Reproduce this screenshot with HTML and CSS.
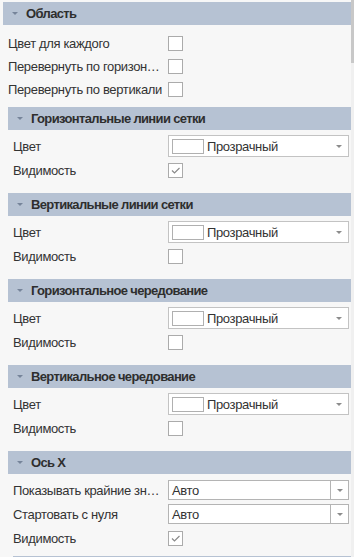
FILE: index.html
```html
<!DOCTYPE html>
<html lang="ru">
<head>
    <meta charset="UTF-8">
    <meta name="viewport" content="width=device-width, initial-scale=1.0">
    <title>Свойства</title>
    <link rel="stylesheet" href="styles.css">
</head>
<body>
    <div class="page">
        <div class="panel">
            <!-- Область -->
            <section class="group top">
                <div class="group-head"><span class="caret"></span>Область</div>
                <div class="group-body">
                    <div class="row">
                        <span class="label">Цвет для каждого</span>
                        <span class="check"></span>
                    </div>
                    <div class="row">
                        <span class="label">Перевернуть по горизонтали</span>
                        <span class="check"></span>
                    </div>
                    <div class="row">
                        <span class="label">Перевернуть по вертикали</span>
                        <span class="check"></span>
                    </div>

                    <section class="group">
                        <div class="group-head"><span class="caret"></span>Горизонтальные линии сетки</div>
                        <div class="group-body">
                            <div class="row">
                                <span class="label">Цвет</span>
                                <div class="color-pick"><span class="swatch"></span><span class="value">Прозрачный</span><span class="arrow"></span></div>
                            </div>
                            <div class="row">
                                <span class="label">Видимость</span>
                                <span class="check on"><svg width="13" height="13" viewBox="0 0 13 13"><polyline points="3,6.5 5.5,9 10.5,4" fill="none" stroke="#8a8a8a" stroke-width="1.2"/></svg></span>
                            </div>
                        </div>
                    </section>

                    <section class="group">
                        <div class="group-head"><span class="caret"></span>Вертикальные линии сетки</div>
                        <div class="group-body">
                            <div class="row">
                                <span class="label">Цвет</span>
                                <div class="color-pick"><span class="swatch"></span><span class="value">Прозрачный</span><span class="arrow"></span></div>
                            </div>
                            <div class="row">
                                <span class="label">Видимость</span>
                                <span class="check"></span>
                            </div>
                        </div>
                    </section>

                    <section class="group">
                        <div class="group-head"><span class="caret"></span>Горизонтальное чередование</div>
                        <div class="group-body">
                            <div class="row">
                                <span class="label">Цвет</span>
                                <div class="color-pick"><span class="swatch"></span><span class="value">Прозрачный</span><span class="arrow"></span></div>
                            </div>
                            <div class="row">
                                <span class="label">Видимость</span>
                                <span class="check"></span>
                            </div>
                        </div>
                    </section>

                    <section class="group">
                        <div class="group-head"><span class="caret"></span>Вертикальное чередование</div>
                        <div class="group-body">
                            <div class="row">
                                <span class="label">Цвет</span>
                                <div class="color-pick"><span class="swatch"></span><span class="value">Прозрачный</span><span class="arrow"></span></div>
                            </div>
                            <div class="row">
                                <span class="label">Видимость</span>
                                <span class="check"></span>
                            </div>
                        </div>
                    </section>

                    <section class="group">
                        <div class="group-head"><span class="caret"></span>Ось X</div>
                        <div class="group-body">
                            <div class="row">
                                <span class="label">Показывать крайние значения</span>
                                <div class="select"><span class="value">Авто</span><span class="select-btn"><span class="arrow"></span></span></div>
                            </div>
                            <div class="row">
                                <span class="label">Стартовать с нуля</span>
                                <div class="select"><span class="value">Авто</span><span class="select-btn"><span class="arrow"></span></span></div>
                            </div>
                            <div class="row">
                                <span class="label">Видимость</span>
                                <span class="check on"><svg width="13" height="13" viewBox="0 0 13 13"><polyline points="3,6.5 5.5,9 10.5,4" fill="none" stroke="#8a8a8a" stroke-width="1.2"/></svg></span>
                            </div>
                            <div class="next-head"></div>
                        </div>
                    </section>
                </div>
            </section>
        </div>
        <div class="scrollbar"><div class="thumb"></div></div>
    </div>
</body>
</html>
```

FILE: styles.css
```css
body {
    margin: 0;
    padding: 0;
    background-color: #f7f7f7;
    font-family: 'Liberation Sans', Arial, sans-serif;
    font-size: 13px;
    letter-spacing: -0.35px;
    color: #333;
}

.page {
    display: flex;
    width: 354px;
    height: 557px;
    overflow: hidden;
}

.panel {
    flex: 1;
    padding: 2px 0 0 3px;
}

/* Скролл */
.scrollbar {
    width: 3px;
    background-color: #f0f0f0;
}

.scrollbar .thumb {
    height: 63px;
    background-color: #c8c8c8;
}

/* Группы */
.group-head {
    display: flex;
    align-items: center;
    height: 23px;
    padding-left: 9px;
    background-color: #b6c2d3;
    font-weight: bold;
    letter-spacing: -0.65px;
    color: #2e2e2e;
}

.caret {
    width: 0;
    height: 0;
    margin-right: 8px;
    border-left: 3px solid transparent;
    border-right: 3px solid transparent;
    border-top: 3px solid #76849a;
}

.top > .group-body {
    padding: 7px 0 0 5px;
}

.top > .group-body > .row {
    height: 23px;
}

.top .group {
    margin-top: 6px;
}

.top .group + .group {
    margin-top: 0;
}

.group .group .group-head {
    padding-left: 9px;
}

.group .group .group-body {
    padding: 4px 0 11px 5px;
}

.row {
    display: flex;
    align-items: center;
    height: 24px;
}

.label {
    flex: 0 0 auto;
    width: 148px;
    margin-right: 7px;
    white-space: nowrap;
    overflow: hidden;
    text-overflow: ellipsis;
}

.top > .group-body > .row .label {
    width: 155px;
    margin-right: 5px;
}

/* Контролы */
.check {
    display: flex;
    align-items: center;
    justify-content: center;
    width: 13px;
    height: 13px;
    border: 1px solid #ababab;
    background-color: #fff;
}

.color-pick {
    display: flex;
    align-items: center;
    width: 179px;
    height: 20px;
    border: 1px solid #c3c3c3;
    background-color: #fff;
}

.swatch {
    width: 30px;
    height: 13px;
    margin: 0 3px 0 3px;
    border: 1px solid #b0b0b0;
    background-color: #fff;
}

.value {
    flex: 1;
}

.arrow {
    width: 0;
    height: 0;
    margin-right: 6px;
    border-left: 3px solid transparent;
    border-right: 3px solid transparent;
    border-top: 3px solid #8c8c8c;
}

.select {
    display: flex;
    align-items: stretch;
    width: 179px;
    height: 18px;
    border: 1px solid #b4b4b4;
    background-color: #fff;
}

.select .value {
    display: flex;
    align-items: center;
    padding-left: 3px;
}

.select-btn {
    display: flex;
    align-items: center;
    justify-content: center;
    width: 17px;
    border-left: 1px solid #b4b4b4;
}

.select-btn .arrow {
    margin: 0;
}

.next-head {
    height: 23px;
    margin-top: 6px;
    background-color: #b6c2d3;
}
```
